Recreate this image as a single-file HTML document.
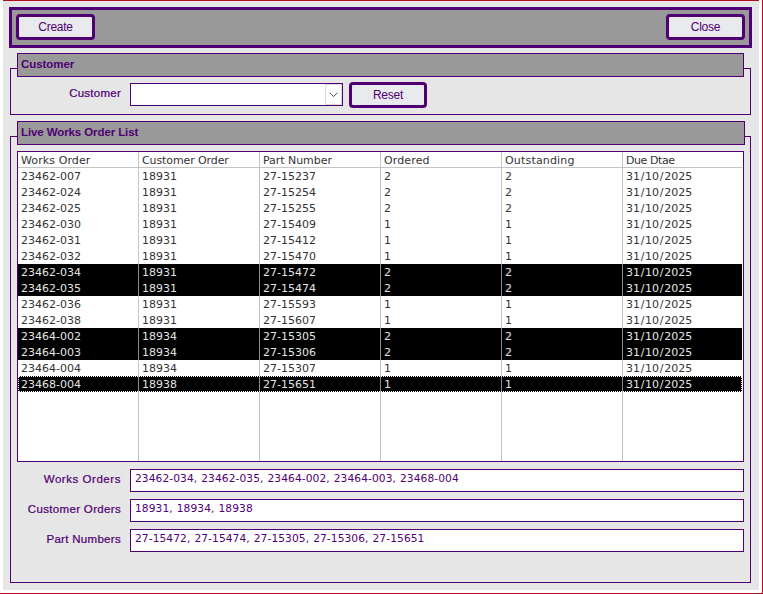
<!DOCTYPE html>
<html><head><meta charset="utf-8"><title>Live Works Order List</title>
<style>
html,body{margin:0;padding:0;}
body{width:763px;height:594px;background:#fff;position:relative;overflow:hidden;font-family:"Liberation Sans",sans-serif;font-size:12px;color:#4f0073;}
div,span{box-sizing:border-box;}
.a{position:absolute;}
.bg{left:3px;top:1px;width:756px;height:589px;background:#e6e6e6;}
.red{background:#b00d23;}
.tb{left:9px;top:7px;width:743px;height:41px;border:3px solid #4f0073;background:#999;}
.btn{height:26px;border:3px solid #4f0073;border-radius:4px;background:#e9eaed;text-align:center;line-height:21px;color:#4f0073;font-size:12px;letter-spacing:-0.25px;}
.grp{border:1px solid #4f0073;}
.hd{left:17px;width:727px;height:24px;background:#999;border:1px solid #4f0073;font-weight:bold;line-height:21px;padding-left:3px;font-size:11.5px;letter-spacing:-0.05px;}
.lbl{text-align:right;width:110px;left:11px;height:16px;line-height:16px;font-size:11.5px;-webkit-text-stroke:0.22px #4f0073;}
.tx{left:130px;width:614px;height:23px;background:#fff;border:1px solid #4f0073;line-height:18px;padding-left:4px;font-family:"DejaVu Sans",sans-serif;font-size:10.67px;letter-spacing:0.08px;word-spacing:0.5px;white-space:nowrap;}
.lv{left:17px;top:151px;width:727px;height:311px;background:#fff;border:1px solid #4f0073;overflow:hidden;color:#333;font-family:"DejaVu Sans",sans-serif;font-size:11px;}
.row{position:absolute;left:0;width:724px;height:16px;line-height:16px;white-space:nowrap;}
.row span{position:absolute;top:1px;height:16px;padding-left:3px;}
.row i{font-style:normal;margin:0 0.7px;}
.sel{background:#000;color:#e4e4e4;}
.vl{position:absolute;top:0;width:1px;height:309px;background:#c4c4c4;}
</style></head><body>
<div class="a bg"></div>
<div class="a red" style="left:3px;top:0;width:756px;height:1px"></div>
<div class="a red" style="left:762px;top:0;width:1px;height:594px"></div>
<div class="a red" style="left:0;top:593px;width:763px;height:1px"></div>

<div class="a tb"></div>
<div class="a btn" style="left:16px;top:14px;width:79px">Create</div>
<div class="a btn" style="left:666px;top:14px;width:79px">Close</div>

<div class="a grp" style="left:10px;top:68px;width:741px;height:47px"></div>
<div class="a hd" style="top:53px">Customer</div>
<div class="a lbl" style="top:85px;letter-spacing:0.25px">Customer</div>
<div class="a" style="left:130px;top:83px;width:213px;height:23px;background:#fff;border:1px solid #4f0073"></div>
<div class="a" style="left:325px;top:84px;width:17px;height:21px;background:#fdfdfd;border:1px solid #dcdcdc"></div>
<svg class="a" style="left:328px;top:91px" width="11" height="8" viewBox="0 0 11 8"><path d="M1.6 1.7 L5.5 5.6 L9.4 1.7" fill="none" stroke="#505050" stroke-width="1"/></svg>
<div class="a btn" style="left:349px;top:82px;width:78px">Reset</div>

<div class="a grp" style="left:10px;top:136px;width:741px;height:447px"></div>
<div class="a hd" style="top:121px;width:728px;letter-spacing:-0.1px">Live Works Order List</div>

<div class="a lv">
<div class="vl" style="left:120px"></div>
<div class="vl" style="left:241px"></div>
<div class="vl" style="left:362px"></div>
<div class="vl" style="left:483px"></div>
<div class="vl" style="left:604px"></div>
<div class="row" style="top:0"><span style="left:0px;letter-spacing:0.1px">Works Order</span><span style="left:121px;letter-spacing:-0.1px">Customer Order</span><span style="left:242px;letter-spacing:-0.05px">Part Number</span><span style="left:363px;letter-spacing:0.13px">Ordered</span><span style="left:484px;letter-spacing:0.18px">Outstanding</span><span style="left:605px;letter-spacing:-0.43px">Due Dtae</span></div>
<div class="a" style="left:0;top:15px;width:724px;height:1px;background:#c4c4c4"></div>
<div class="row" style="top:16px"><span style="left:0px">23462-007</span><span style="left:121px">18931</span><span style="left:242px">27-15237</span><span style="left:363px">2</span><span style="left:484px">2</span><span style="left:605px">31<i>/</i>10<i>/</i>2025</span></div>
<div class="row" style="top:32px"><span style="left:0px">23462-024</span><span style="left:121px">18931</span><span style="left:242px">27-15254</span><span style="left:363px">2</span><span style="left:484px">2</span><span style="left:605px">31<i>/</i>10<i>/</i>2025</span></div>
<div class="row" style="top:48px"><span style="left:0px">23462-025</span><span style="left:121px">18931</span><span style="left:242px">27-15255</span><span style="left:363px">2</span><span style="left:484px">2</span><span style="left:605px">31<i>/</i>10<i>/</i>2025</span></div>
<div class="row" style="top:64px"><span style="left:0px">23462-030</span><span style="left:121px">18931</span><span style="left:242px">27-15409</span><span style="left:363px">1</span><span style="left:484px">1</span><span style="left:605px">31<i>/</i>10<i>/</i>2025</span></div>
<div class="row" style="top:80px"><span style="left:0px">23462-031</span><span style="left:121px">18931</span><span style="left:242px">27-15412</span><span style="left:363px">1</span><span style="left:484px">1</span><span style="left:605px">31<i>/</i>10<i>/</i>2025</span></div>
<div class="row" style="top:96px"><span style="left:0px">23462-032</span><span style="left:121px">18931</span><span style="left:242px">27-15470</span><span style="left:363px">1</span><span style="left:484px">1</span><span style="left:605px">31<i>/</i>10<i>/</i>2025</span></div>
<div class="row sel" style="top:112px"><span style="left:0px">23462-034</span><span style="left:121px">18931</span><span style="left:242px">27-15472</span><span style="left:363px">2</span><span style="left:484px">2</span><span style="left:605px">31<i>/</i>10<i>/</i>2025</span></div>
<div class="a" style="left:120px;top:112px;width:1px;height:16px;background:#8a8a8a"></div><div class="a" style="left:241px;top:112px;width:1px;height:16px;background:#8a8a8a"></div><div class="a" style="left:362px;top:112px;width:1px;height:16px;background:#8a8a8a"></div><div class="a" style="left:483px;top:112px;width:1px;height:16px;background:#8a8a8a"></div><div class="a" style="left:604px;top:112px;width:1px;height:16px;background:#8a8a8a"></div>
<div class="row sel" style="top:128px"><span style="left:0px">23462-035</span><span style="left:121px">18931</span><span style="left:242px">27-15474</span><span style="left:363px">2</span><span style="left:484px">2</span><span style="left:605px">31<i>/</i>10<i>/</i>2025</span></div>
<div class="a" style="left:120px;top:128px;width:1px;height:16px;background:#8a8a8a"></div><div class="a" style="left:241px;top:128px;width:1px;height:16px;background:#8a8a8a"></div><div class="a" style="left:362px;top:128px;width:1px;height:16px;background:#8a8a8a"></div><div class="a" style="left:483px;top:128px;width:1px;height:16px;background:#8a8a8a"></div><div class="a" style="left:604px;top:128px;width:1px;height:16px;background:#8a8a8a"></div>
<div class="row" style="top:144px"><span style="left:0px">23462-036</span><span style="left:121px">18931</span><span style="left:242px">27-15593</span><span style="left:363px">1</span><span style="left:484px">1</span><span style="left:605px">31<i>/</i>10<i>/</i>2025</span></div>
<div class="row" style="top:160px"><span style="left:0px">23462-038</span><span style="left:121px">18931</span><span style="left:242px">27-15607</span><span style="left:363px">1</span><span style="left:484px">1</span><span style="left:605px">31<i>/</i>10<i>/</i>2025</span></div>
<div class="row sel" style="top:176px"><span style="left:0px">23464-002</span><span style="left:121px">18934</span><span style="left:242px">27-15305</span><span style="left:363px">2</span><span style="left:484px">2</span><span style="left:605px">31<i>/</i>10<i>/</i>2025</span></div>
<div class="a" style="left:120px;top:176px;width:1px;height:16px;background:#8a8a8a"></div><div class="a" style="left:241px;top:176px;width:1px;height:16px;background:#8a8a8a"></div><div class="a" style="left:362px;top:176px;width:1px;height:16px;background:#8a8a8a"></div><div class="a" style="left:483px;top:176px;width:1px;height:16px;background:#8a8a8a"></div><div class="a" style="left:604px;top:176px;width:1px;height:16px;background:#8a8a8a"></div>
<div class="row sel" style="top:192px"><span style="left:0px">23464-003</span><span style="left:121px">18934</span><span style="left:242px">27-15306</span><span style="left:363px">2</span><span style="left:484px">2</span><span style="left:605px">31<i>/</i>10<i>/</i>2025</span></div>
<div class="a" style="left:120px;top:192px;width:1px;height:16px;background:#8a8a8a"></div><div class="a" style="left:241px;top:192px;width:1px;height:16px;background:#8a8a8a"></div><div class="a" style="left:362px;top:192px;width:1px;height:16px;background:#8a8a8a"></div><div class="a" style="left:483px;top:192px;width:1px;height:16px;background:#8a8a8a"></div><div class="a" style="left:604px;top:192px;width:1px;height:16px;background:#8a8a8a"></div>
<div class="row" style="top:208px"><span style="left:0px">23464-004</span><span style="left:121px">18934</span><span style="left:242px">27-15307</span><span style="left:363px">1</span><span style="left:484px">1</span><span style="left:605px">31<i>/</i>10<i>/</i>2025</span></div>
<div class="row sel" style="top:224px"><span style="left:0px">23468-004</span><span style="left:121px">18938</span><span style="left:242px">27-15651</span><span style="left:363px">1</span><span style="left:484px">1</span><span style="left:605px">31<i>/</i>10<i>/</i>2025</span></div>
<div class="a" style="left:120px;top:224px;width:1px;height:16px;background:#8a8a8a"></div><div class="a" style="left:241px;top:224px;width:1px;height:16px;background:#8a8a8a"></div><div class="a" style="left:362px;top:224px;width:1px;height:16px;background:#8a8a8a"></div><div class="a" style="left:483px;top:224px;width:1px;height:16px;background:#8a8a8a"></div><div class="a" style="left:604px;top:224px;width:1px;height:16px;background:#8a8a8a"></div>
<div class="a" style="left:0;top:224px;width:724px;height:16px;border:1px dotted #fff"></div>
</div>

<div class="a lbl" style="top:471px;letter-spacing:0.55px">Works Orders</div>
<div class="a tx" style="top:469px">23462-034, 23462-035, 23464-002, 23464-003, 23468-004</div>
<div class="a lbl" style="top:501px;letter-spacing:0.33px">Customer Orders</div>
<div class="a tx" style="top:499px">18931, 18934, 18938</div>
<div class="a lbl" style="top:531px;letter-spacing:0.3px">Part Numbers</div>
<div class="a tx" style="top:529px">27-15472, 27-15474, 27-15305, 27-15306, 27-15651</div>
</body></html>
